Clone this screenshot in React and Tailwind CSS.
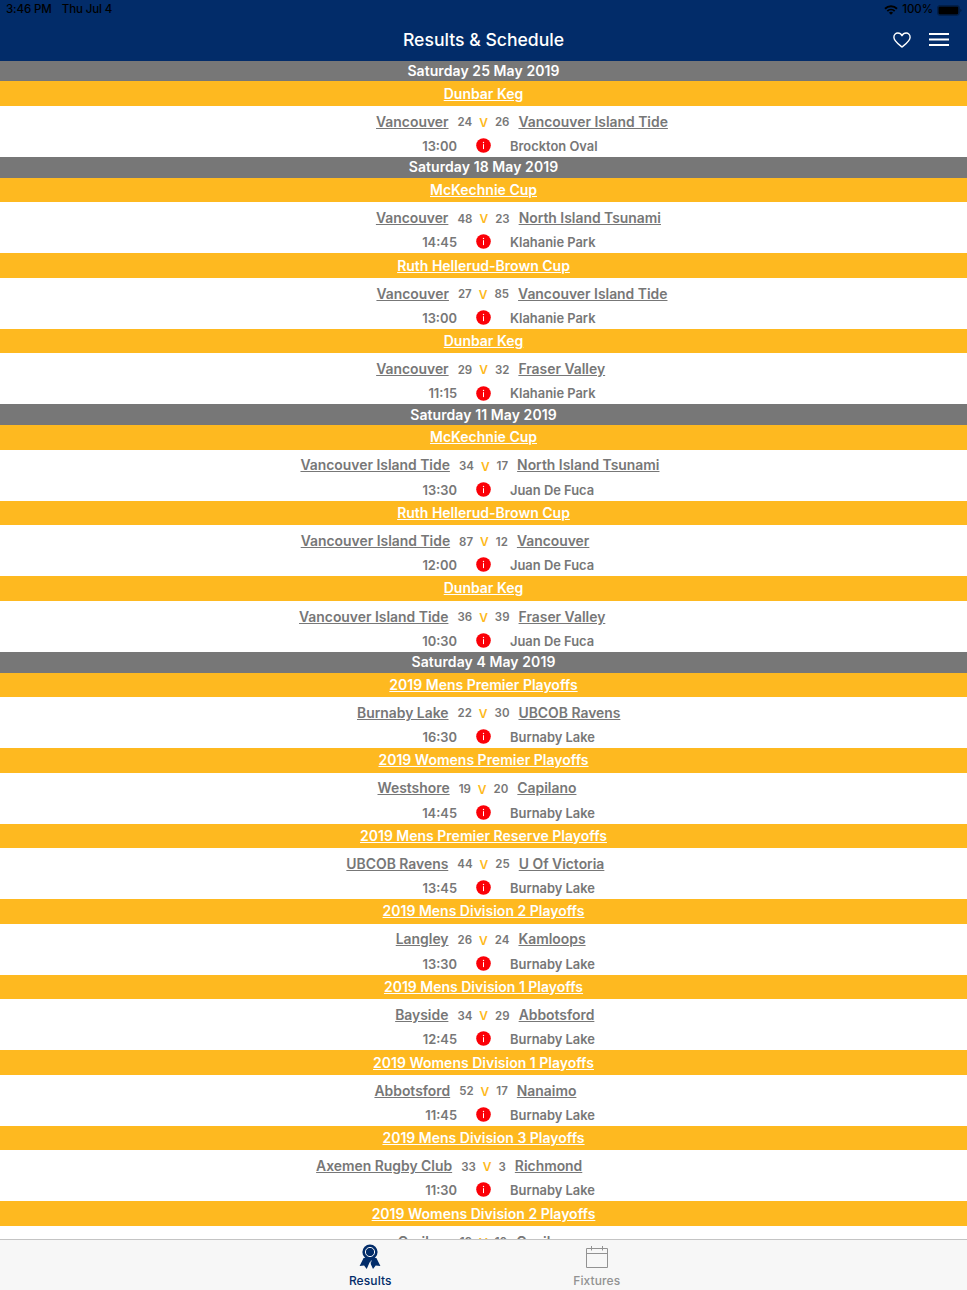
import { Fragment } from "react"

const days = [
  {
    date: "Saturday 25 May 2019",
    games: [
      { cup: "Dunbar Keg", home: "Vancouver", hs: 24, as: 26, away: "Vancouver Island Tide", time: "13:00", venue: "Brockton Oval" },
    ],
  },
  {
    date: "Saturday 18 May 2019",
    games: [
      { cup: "McKechnie Cup", home: "Vancouver", hs: 48, as: 23, away: "North Island Tsunami", time: "14:45", venue: "Klahanie Park" },
      { cup: "Ruth Hellerud-Brown Cup", home: "Vancouver", hs: 27, as: 85, away: "Vancouver Island Tide", time: "13:00", venue: "Klahanie Park" },
      { cup: "Dunbar Keg", home: "Vancouver", hs: 29, as: 32, away: "Fraser Valley", time: "11:15", venue: "Klahanie Park" },
    ],
  },
  {
    date: "Saturday 11 May 2019",
    games: [
      { cup: "McKechnie Cup", home: "Vancouver Island Tide", hs: 34, as: 17, away: "North Island Tsunami", time: "13:30", venue: "Juan De Fuca" },
      { cup: "Ruth Hellerud-Brown Cup", home: "Vancouver Island Tide", hs: 87, as: 12, away: "Vancouver", time: "12:00", venue: "Juan De Fuca" },
      { cup: "Dunbar Keg", home: "Vancouver Island Tide", hs: 36, as: 39, away: "Fraser Valley", time: "10:30", venue: "Juan De Fuca" },
    ],
  },
  {
    date: "Saturday 4 May 2019",
    games: [
      { cup: "2019 Mens Premier Playoffs", home: "Burnaby Lake", hs: 22, as: 30, away: "UBCOB Ravens", time: "16:30", venue: "Burnaby Lake" },
      { cup: "2019 Womens Premier Playoffs", home: "Westshore", hs: 19, as: 20, away: "Capilano", time: "14:45", venue: "Burnaby Lake" },
      { cup: "2019 Mens Premier Reserve Playoffs", home: "UBCOB Ravens", hs: 44, as: 25, away: "U Of Victoria", time: "13:45", venue: "Burnaby Lake" },
      { cup: "2019 Mens Division 2 Playoffs", home: "Langley", hs: 26, as: 24, away: "Kamloops", time: "13:30", venue: "Burnaby Lake" },
      { cup: "2019 Mens Division 1 Playoffs", home: "Bayside", hs: 34, as: 29, away: "Abbotsford", time: "12:45", venue: "Burnaby Lake" },
      { cup: "2019 Womens Division 1 Playoffs", home: "Abbotsford", hs: 52, as: 17, away: "Nanaimo", time: "11:45", venue: "Burnaby Lake" },
      { cup: "2019 Mens Division 3 Playoffs", home: "Axemen Rugby Club", hs: 33, as: 3, away: "Richmond", time: "11:30", venue: "Burnaby Lake" },
      { cup: "2019 Womens Division 2 Playoffs", home: "Cariboo", hs: 19, as: 10, away: "Capilano", time: "10:30", venue: "Burnaby Lake" },
    ],
  },
]

function Header() {
  return (
    <header className="h-[60.7px] shrink-0 bg-[#022c69]">
      <div className="flex h-[19px] items-center justify-between pl-1.5 pr-[5px] pt-px text-[11.5px] font-medium text-black">
        <div className="flex gap-[10px] tracking-[-0.1px]">
          <span>3:46 PM</span>
          <span>Thu Jul 4</span>
        </div>
        <div className="flex items-center gap-1">
          <svg width="14" height="10" viewBox="0 0 14 10" fill="none" stroke="currentColor" strokeWidth="1.9">
            <path d="M1 3.7a8.6 8.6 0 0 1 12 0" />
            <path d="M3.3 6.1a5.3 5.3 0 0 1 7.4 0" />
            <path d="M7 9.8 4.9 7.7a3 3 0 0 1 4.2 0z" fill="currentColor" stroke="none" />
          </svg>
          <span className="tracking-[-0.1px]">100%</span>
          <svg width="25" height="11" viewBox="0 0 25 11">
            <rect x="0.4" y="0.4" width="22" height="10" rx="2.6" fill="none" stroke="currentColor" strokeOpacity="0.4" strokeWidth="0.8" />
            <rect x="1.4" y="1.400" width="20" height="8" rx="1.4" fill="currentColor" />
            <path d="M23.300 3.800a1.700 1.700 0 0 1 0 3.200z" fill="currentColor" fillOpacity="0.4" />
          </svg>
        </div>
      </div>
      <div className="grid h-[41px] grid-cols-[1fr_auto_1fr] items-center text-white">
        <h1 className="col-start-2 pt-0.5 text-[17.6px] font-medium">Results &amp; Schedule</h1>
        <div className="flex items-center justify-end gap-[18px] pr-[18.5px]">
          <svg width="18" height="16" viewBox="0 0 18 16" fill="none" stroke="currentColor" strokeWidth="1.4" strokeLinejoin="round">
            <path d="M9 15C5.5 12.2.9 9.2.9 5.3.9 2.8 2.7 1 4.900 1 6.700 1 8.200 2 9 3.700 9.800 2 11.300 1 13.100 1c2.200 0 4 1.800 4 4.300C17.100 9.200 12.500 12.200 9 15z" />
          </svg>
          <svg width="20" height="13" viewBox="0 0 20 13" fill="none" stroke="currentColor" strokeWidth="1.8">
            <path d="M0 1h20M0 6.500h20M0 12h20" />
          </svg>
        </div>
      </div>
    </header>
  )
}

function Game({ game }) {
  return (
    <>
      <div className="flex h-[24.5px] items-center justify-center bg-[#feb920] pb-px text-[14px] font-semibold text-white">
        <a className="underline">{game.cup}</a>
      </div>
      <div className="h-[51.05px] bg-white text-[#777]">
        <div className="grid h-[31px] grid-cols-[1fr_auto_1fr] items-center pt-[1.5px] text-[13.9px] font-semibold">
          <a className="text-right underline">{game.home}</a>
          <div className="flex items-center gap-[7px] px-[9px] pt-[1.5px] text-[11.5px]">
            <span>{game.hs}</span>
            <span className="text-[12px] text-[#feb920]">V</span>
            <span>{game.as}</span>
          </div>
          <a className="underline">{game.away}</a>
        </div>
        <div className="grid h-4 grid-cols-[1fr_auto_1fr] items-center text-[12.9px] font-semibold">
          <span className="text-right">{game.time}</span>
          <div className="flex w-[53px] justify-center pb-[2px] pr-px">
            <svg width="15" height="15" viewBox="0 0 15 15">
              <circle cx="7.500" cy="7.500" r="7.300" fill="#fb0007" />
              <circle cx="7.500" cy="4.500" r="0.700" fill="#fff" />
              <path d="M7.500 6.200v4.900" stroke="#fff" strokeWidth="1" />
            </svg>
          </div>
          <span>{game.venue}</span>
        </div>
      </div>
    </>
  )
}

function TabBar() {
  return (
    <nav className="flex h-[51px] shrink-0 justify-center border-t border-[#c4c4c4] bg-[#f7f7f7] text-[12px] font-medium">
      <a className="flex w-[226.5px] flex-col items-center pt-1 text-[#022c69]">
        <svg width="22" height="25" viewBox="0 0 22 25">
          <path d="M4.600 14 .6 22l4.500-.6L7.700 25l3.100-7L14 25l2.700-3.600 4.700.6-4-8z" fill="currentColor" />
          <path d="m12.300 16.500-2.200 6" stroke="#f7f7f7" strokeWidth="0.800" />
          <circle cx="11" cy="8" r="7.600" fill="currentColor" />
          <circle cx="11" cy="8" r="4.600" fill="none" stroke="#f7f7f7" strokeWidth="1" />
        </svg>
        <span className="mt-1 leading-4 tracking-[0.1px]">Results</span>
      </a>
      <a className="flex w-[226.5px] flex-col items-center pt-1 text-[#929292]">
        <svg width="22" height="25" viewBox="0 0 22 25" fill="none" stroke="currentColor" strokeWidth="1">
          <path d="M.5 4.500h21v19H.5zM.5 9.500h21M5.500 2v4.500M16.500 2v4.500" />
        </svg>
        <span className="mt-1 leading-4 tracking-[0.1px]">Fixtures</span>
      </a>
    </nav>
  )
}

export default function App() {
  return (
    <div className="flex h-screen flex-col overflow-hidden bg-white font-['Inter',sans-serif]">
      <Header />
      <main className="min-h-0 flex-1 overflow-hidden">
        {days.map((day) => (
          <Fragment key={day.date}>
            <h2 className="flex h-[20.75px] items-center justify-center bg-[#777] pb-px text-[14px] font-semibold tracking-[0.08px] text-white">
              {day.date}
            </h2>
            {day.games.map((game) => (
              <Game key={game.cup} game={game} />
            ))}
          </Fragment>
        ))}
      </main>
      <TabBar />
    </div>
  )
}
